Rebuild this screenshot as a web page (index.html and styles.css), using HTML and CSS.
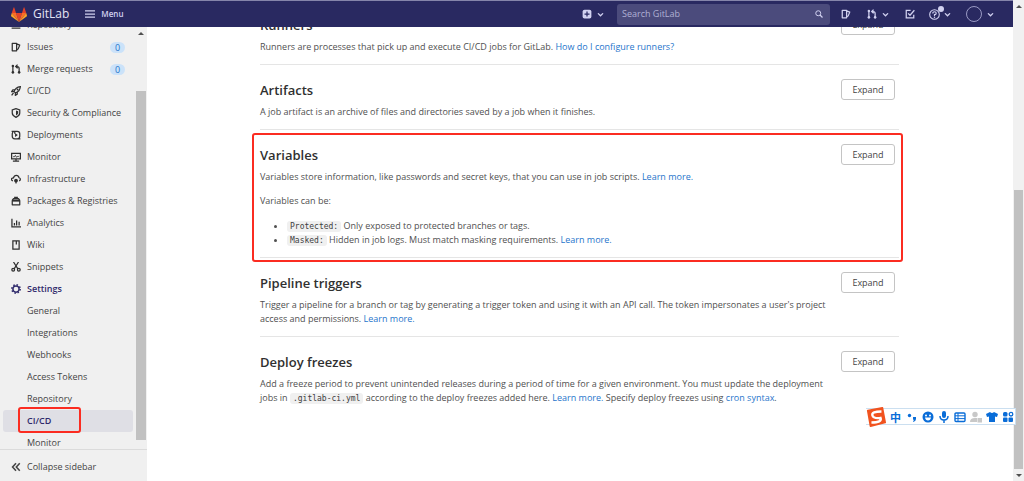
FILE: index.html
```html
<!DOCTYPE html>
<html lang="en">
<head>
<meta charset="utf-8">
<title>CI/CD Settings · GitLab</title>
<link rel="stylesheet" href="styles.css">
</head>
<body>
<svg class="defs" aria-hidden="true">
  <symbol id="merge" viewBox="0 0 16 16"><path d="M3 4v11M13 15V7q0-3-3-3H8M10.500 1 7.500 4l3 3" fill="none" stroke="currentColor" stroke-width="2"/><circle cx="3" cy="3" r="2" fill="currentColor"/><circle cx="13" cy="13" r="2" fill="currentColor"/><circle cx="3" cy="13" r="2" fill="currentColor"/></symbol>
  <symbol id="issues" viewBox="0 0 16 16"><path d="M2 2h7v12H2zM9 3l5 2-2.500 6L9 13" fill="none" stroke="currentColor" stroke-width="2" stroke-linejoin="round"/></symbol>
  <symbol id="chevron" viewBox="0 0 16 16"><path d="m3 6 5 5 5-5" fill="none" stroke="currentColor" stroke-width="3" stroke-linecap="round"/></symbol>
</svg>
<div class="window">
  <div class="app">
    <header class="navbar">
      <a class="brand" href="#">
        <svg class="logo" viewBox="0 0 32 30"><path fill="#e24329" d="m16 30 6-18H10z"/><path fill="#fc6d26" d="m16 30-6-18H1.500zM16 30l6-18h8.500z"/><path fill="#fca326" d="M1.500 12 0 17.500q0 1 .8 1.600L16 30zM30.500 12l1.500 5.500q0 1-.8 1.600L16 30z"/><path fill="#e24329" d="M1.500 12H10L6.500 1q-.6-1-1.200 0zM30.500 12H22l3.500-11q.6-1 1.200 0z"/></svg>
        <span>GitLab</span>
      </a>
      <button class="menu" type="button">
        <svg class="icon" viewBox="0 0 16 16"><path d="M0 3h16M0 8h16M0 13h16" stroke="currentColor" stroke-width="2"/></svg>
        Menu
      </button>
      <div class="tools">
        <button type="button" class="tool" aria-label="Create new"><svg class="icon" viewBox="0 0 16 16"><rect x="1" y="1" width="14" height="14" rx="3" fill="currentColor"/><path d="M8 4v8M4 8h8" stroke="#292961" stroke-width="2"/></svg><svg class="caret"><use href="#chevron"/></svg></button>
        <label class="search"><input type="search" placeholder="Search GitLab" aria-label="Search GitLab"><svg class="icon small" viewBox="0 0 16 16"><circle cx="6.500" cy="6.500" r="5" fill="none" stroke="currentColor" stroke-width="2"/><path d="m10 10 5 5" stroke="currentColor" stroke-width="2.500"/></svg></label>
        <button type="button" class="tool issues-tool" aria-label="Issues"><svg class="icon"><use href="#issues"/></svg></button>
        <button type="button" class="tool" aria-label="Merge requests"><svg class="icon"><use href="#merge"/></svg><svg class="caret"><use href="#chevron"/></svg></button>
        <button type="button" class="tool todo-tool" aria-label="To-do"><svg class="icon" viewBox="0 0 16 16"><path d="M9 2H2v12h12V9M5 7l3 3 7-8" fill="none" stroke="currentColor" stroke-width="2"/></svg></button>
        <button type="button" class="tool help" aria-label="Help"><svg class="icon large" viewBox="0 0 16 16"><circle cx="8" cy="8" r="7" fill="none" stroke="currentColor" stroke-width="1.600"/><path d="M5.500 6.500Q5.500 4 8 4t2.500 2.200Q10.500 8 8 8.200V10" fill="none" stroke="currentColor" stroke-width="1.700"/><circle cx="8" cy="12" r="1.100" fill="currentColor"/></svg><svg class="caret"><use href="#chevron"/></svg><i class="dot"></i></button>
        <button type="button" class="tool user" aria-label="Account"><i class="avatar"></i><svg class="caret"><use href="#chevron"/></svg></button>
      </div>
    </header>
    <div class="body">
      <aside class="sidebar">
        <div class="scroll">
          <nav class="nav">
            <a class="item" href="#"><svg class="icon" viewBox="0 0 16 16"><path d="M2 10V2h12v8M1 13h14" fill="none" stroke="currentColor" stroke-width="2"/></svg>Repository</a>
            <a class="item" href="#"><svg class="icon"><use href="#issues"/></svg>Issues<span class="badge">0</span></a>
            <a class="item" href="#"><svg class="icon"><use href="#merge"/></svg>Merge requests<span class="badge">0</span></a>
            <a class="item" href="#"><svg class="icon" viewBox="0 0 16 16"><path d="M5 9q2-7 10-8-1 8-8 10zM6 6H3L1 9l4 0M10 10v3l-3 2v-4M4 11l-3 4" fill="none" stroke="currentColor" stroke-width="2"/><circle cx="10.500" cy="5.500" r="1.500" fill="currentColor"/></svg>CI/CD</a>
            <a class="item" href="#"><svg class="icon" viewBox="0 0 16 16"><path d="M8 1 2 3v5q0 4 6 7 6-3 6-7V3z" fill="none" stroke="currentColor" stroke-width="2"/><path d="M8 4v8q3.500-2 3.500-4V5z" fill="currentColor"/></svg>Security &amp; Compliance</a>
            <a class="item" href="#"><svg class="icon" viewBox="0 0 16 16"><path d="M6 2h4q4 0 4 4v4q0 4-4 4H8M10 14H6q-4 0-4-4V6q0-3 3-4M1 2h5v4M15 14h-5" fill="none" stroke="currentColor" stroke-width="2"/><path d="m6.500 5 4.500 3-4.500 3z" fill="currentColor"/></svg>Deployments</a>
            <a class="item" href="#"><svg class="icon" viewBox="0 0 16 16"><path d="M1 2h14v9H1zM3 14.500h10M8 11v3" fill="none" stroke="currentColor" stroke-width="2"/><path d="M3.500 7.500h2l1.500-2 2 3 1.500-1.500h2" fill="none" stroke="currentColor" stroke-width="1.500"/></svg>Monitor</a>
            <a class="item" href="#"><svg class="icon" viewBox="0 0 16 16"><path d="M3 11Q0 10 1 7.500 2 6 4 6q1-4 4.500-4T13 6q2 .5 2 2.500T13 11" fill="none" stroke="currentColor" stroke-width="2"/><circle cx="8" cy="10.500" r="3" fill="currentColor"/><path d="M8 9v6" fill="none" stroke="currentColor" stroke-width="2"/></svg>Infrastructure</a>
            <a class="item" href="#"><svg class="icon" viewBox="0 0 16 16"><path d="M2 7h12v7H2zM2 7l2-3h8l2 3M5 2h6" fill="none" stroke="currentColor" stroke-width="2" stroke-linejoin="round"/><path d="M2 6h12v3H2z" fill="currentColor"/></svg>Packages &amp; Registries</a>
            <a class="item" href="#"><svg class="icon" viewBox="0 0 16 16"><path d="M1.500 1v13H16M5.500 8v4M9 4v8M13 6v6" fill="none" stroke="currentColor" stroke-width="2"/></svg>Analytics</a>
            <a class="item" href="#"><svg class="icon" viewBox="0 0 16 16"><path d="M3 1.500h10v13H3zM8.500 1v6" fill="none" stroke="currentColor" stroke-width="2"/></svg>Wiki</a>
            <a class="item" href="#"><svg class="icon" viewBox="0 0 16 16"><path d="m4 0 7 11M12 0 5 11" stroke="currentColor" stroke-width="2"/><circle cx="3.500" cy="12.500" r="2.200" fill="none" stroke="currentColor" stroke-width="2"/><circle cx="12.500" cy="12.500" r="2.200" fill="none" stroke="currentColor" stroke-width="2"/></svg>Snippets</a>
            <a class="item current" href="#"><svg class="icon" viewBox="0 0 16 16"><circle cx="8" cy="8" r="5" fill="none" stroke="currentColor" stroke-width="2.400"/><circle cx="8" cy="8" r="6.700" fill="none" stroke="currentColor" stroke-width="2.400" stroke-dasharray="2.400 2.862"/></svg>Settings</a>
            <a class="item sub" href="#">General</a>
            <a class="item sub" href="#">Integrations</a>
            <a class="item sub" href="#">Webhooks</a>
            <a class="item sub" href="#">Access Tokens</a>
            <a class="item sub" href="#">Repository</a>
            <a class="item sub active" href="#">CI/CD</a>
            <a class="item sub" href="#">Monitor</a>
          </nav>
          <div class="side-track"><i class="arrow up"></i><i class="thumb"></i></div>
        </div>
        <button class="collapse" type="button"><svg class="icon" viewBox="0 0 16 16"><path d="M8 2 2.500 8 8 14M14 2 8.500 8l5.500 6" fill="none" stroke="currentColor" stroke-width="2.500"/></svg>Collapse sidebar</button>
      </aside>
      <main class="main">
        <div class="content">
          <section class="section">
            <div class="text"><h4>Runners</h4><p>Runners are processes that pick up and execute CI/CD jobs for GitLab. <a href="#">How do I configure runners?</a></p></div>
            <button type="button" class="expand">Expand</button>
          </section>
          <section class="section">
            <div class="text"><h4>Artifacts</h4><p>A job artifact is an archive of files and directories saved by a job when it finishes.</p></div>
            <button type="button" class="expand">Expand</button>
          </section>
          <section class="section marked">
            <div class="text"><h4>Variables</h4><p>Variables store information, like passwords and secret keys, that you can use in job scripts. <a href="#">Learn more.</a></p><p>Variables can be:</p>
              <ul><li><code>Protected:</code> Only exposed to protected branches or tags.</li><li><code>Masked:</code> Hidden in job logs. Must match masking requirements. <a href="#">Learn more.</a></li></ul></div>
            <button type="button" class="expand">Expand</button>
          </section>
          <section class="section">
            <div class="text"><h4>Pipeline triggers</h4><p>Trigger a pipeline for a branch or tag by generating a trigger token and using it with an API call. The token impersonates a user's project access and permissions. <a href="#">Learn more.</a></p></div>
            <button type="button" class="expand">Expand</button>
          </section>
          <section class="section">
            <div class="text"><h4>Deploy freezes</h4><p>Add a freeze period to prevent unintended releases during a period of time for a given environment. You must update the deployment jobs in <code>.gitlab-ci.yml</code> according to the deploy freezes added here. <a href="#">Learn more.</a> Specify deploy freezes using <a href="#">cron syntax</a>.</p></div>
            <button type="button" class="expand">Expand</button>
          </section>
        </div>
      </main>
    </div>
  </div>
  <div class="page-track"><i class="arrow up"></i><i class="thumb"></i><i class="arrow down"></i></div>
</div>
<div class="ime">
  <svg class="ime-logo" viewBox="0 0 22 22"><path d="M2 4 18 1l3 16-16 4z" fill="#f1531f" stroke="#f1531f" stroke-width="2" stroke-linejoin="round"/><path d="M17 5Q6 5 7 9t9 3q2 5-10 5" fill="none" stroke="#fff" stroke-width="2.600"/></svg>
  <span class="ime-lang">中</span>
  <svg viewBox="0 0 12 12"><circle cx="3.500" cy="4.500" r="1.700"/><path d="M7 6h3v2q0 2-2.500 3l-.5-.8 1.200-1.400H7z"/></svg>
  <svg viewBox="0 0 12 12"><circle cx="6" cy="6" r="5.500"/><circle cx="4" cy="4.500" r="1" fill="#fff"/><circle cx="8" cy="4.500" r="1" fill="#fff"/><path d="M3 6.500h6q-.5 3-3 3t-3-3z" fill="#fff"/></svg>
  <svg viewBox="0 0 12 12"><rect x="4" y="0" width="4" height="7" rx="2"/><path d="M2 5q0 4 4 4t4-4M6 9v3" fill="none" stroke="currentColor" stroke-width="1.500"/></svg>
  <svg viewBox="0 0 12 12"><rect x="1" y="2" width="10" height="8.500" rx="1" fill="none" stroke="currentColor" stroke-width="1.400"/><path d="M1 4.800h10M1 7.600h10M4 2v8" stroke="currentColor"/></svg>
  <svg class="off" viewBox="0 0 12 12"><circle cx="5" cy="3.500" r="2.700"/><path d="M0 11q0-4 5-4h2v4zM7.500 7H12v4.500H7.500z"/></svg>
  <svg viewBox="0 0 12 12"><path d="m4 1-4 2 1 3 2-.5V11h6V5.500l2 .5 1-3-4-2Q6 3 4 1z"/></svg>
  <svg viewBox="0 0 12 12"><rect x="1" y="1" width="4.500" height="4.500" rx="1.500"/><circle cx="9" cy="3.200" r="1.800" fill="none" stroke="currentColor" stroke-width="1.300"/><rect x="1" y="6.500" width="4.500" height="4.500" rx="1"/><rect x="6.500" y="6.500" width="4.500" height="4.500" rx="1"/></svg>
</div>
</body>
</html>
```
FILE: styles.css
```css
*, *::before, *::after { box-sizing: border-box; }
body { margin: 0; font: 9px/14px "Open Sans", "Noto Sans", sans-serif; color: #505050; background: #fff; }
a { color: #1f75cb; text-decoration: none; }
button { font: inherit; color: inherit; background: none; border: 0; padding: 0; }
svg { flex: none; }
.defs { position: absolute; width: 0; height: 0; }
.window { display: flex; height: 100vh; overflow: hidden; }
.app { flex: 1; min-width: 0; display: flex; flex-direction: column; }
.icon { width: 10px; height: 10px; }
.icon.small { width: 8px; height: 8px; }
.icon.large { width: 11px; height: 11px; }
.caret { width: 7px; height: 7px; }

.navbar { flex: none; display: flex; align-items: center; height: 27px; padding: 0 19px 0 11px; border-top: 1px solid #8585aa; background: #292961; color: #d1d1f0; }
.brand { display: flex; align-items: center; gap: 6px; color: #e4e4f4; font-size: 12px; }
.logo { width: 16px; height: 15px; }
.menu { display: flex; align-items: center; gap: 6px; margin-left: 16px; font-size: 8px; font-weight: 600; }
.tools { display: flex; align-items: center; margin-left: auto; }
.tool { display: flex; align-items: center; gap: 5px; }
.search { display: flex; align-items: center; width: 213px; height: 21px; margin: 0 11px 0 13px; padding: 0 7px 0 5px; border-radius: 3px; background: #4b4b7c; }
.search input { flex: 1; min-width: 0; padding: 0; border: 0; outline: 0; background: none; font: inherit; color: #fff; }
.search input::placeholder { color: #b0b0d4; opacity: 1; }
.issues-tool { margin-right: 16px; }
.todo-tool { margin: 0 14px 0 16px; }
.help { position: relative; gap: 4px; margin-right: 15px; }
.dot { position: absolute; left: 9px; top: -3px; width: 6px; height: 6px; border-radius: 50%; background: #d1d1f0; }
.avatar { width: 16px; height: 16px; border: 1px solid #9a9ac4; border-radius: 50%; }

.body { flex: 1; min-height: 0; display: flex; }
.sidebar { flex: none; display: flex; flex-direction: column; width: 147px; background: #f0f0f0; color: #444; }
.scroll { flex: 1; min-height: 0; display: flex; overflow: hidden; }
.nav { flex: 1; min-width: 0; margin-top: -13px; padding: 0 3px; }
.item { display: flex; align-items: center; gap: 6px; height: 22px; padding: 0 8px; border-radius: 3px; color: inherit; white-space: nowrap; }
.item .icon { color: #303030; }
.badge { width: 15px; height: 11px; margin-left: auto; border-radius: 6px; background: #cbe2f9; color: #1f75cb; line-height: 11px; text-align: center; }
.item.current, .item.current .icon { color: #2f2a6b; font-weight: 600; }
.item.sub { padding-left: 24px; }
.item.active { background: #dfdfe5; color: #2f2a6b; font-weight: 600; position: relative; }
.active::after { content: ""; position: absolute; left: 15px; top: -3px; width: 63px; height: 26px; border: 2px solid #fb2c21; border-radius: 3px; }
.side-track { flex: none; display: flex; flex-direction: column; align-items: center; width: 11px; padding: 5px 1px 9px 0; }
.side-track .thumb { flex: 1; width: 10px; margin-top: 56px; background: #c1c1c1; }
.arrow { border: 3px solid transparent; border-top-width: 0; border-bottom: 3px solid #505050; }
.arrow.down { transform: rotate(180deg); }
.collapse { display: flex; align-items: center; gap: 6px; height: 32px; padding: 2px 11px 0; border-top: 1px solid #dbdbdb; }

.main { flex: 1; min-width: 0; overflow: hidden; }
.content { margin: -27px 114px 0 113px; }
.section { display: flex; justify-content: space-between; align-items: flex-start; position: relative; padding: 14px 4px 10px 0; border-bottom: 1px solid #e5e5e5; }
.section:last-child { border-bottom: 0; }
.text { width: 576px; }
h4 { margin: 0 0 4px; font-size: 13px; line-height: 22px; font-weight: 600; color: #303030; }
p { margin: 0 0 10px; }
p:last-child { margin: 0; }
ul { margin: 0; padding-left: 27px; }
.text p + ul { margin-top: 11px; }
code { padding: 1px 3px; border-radius: 3px; background: #f0f0f0; font: 8px/10px "DejaVu Sans Mono", monospace; color: #404040; }
.expand { flex: none; width: 54px; height: 21px; border: 1px solid #c4c4c4; border-radius: 3px; background: #fff; color: #444; }
.marked::after { content: ""; position: absolute; inset: 3px -4px -5px -8px; border: 2px solid #fb2c21; border-radius: 3px; pointer-events: none; }

.page-track { flex: none; display: flex; flex-direction: column; align-items: center; width: 11px; padding: 5px 0 4px; background: #f1f1f1; }
.page-track .thumb { width: 9px; height: 279px; margin-top: auto; margin-bottom: 5px; background: #c1c1c1; }

.ime { position: absolute; right: 8px; bottom: 56px; display: flex; align-items: center; gap: 4px; height: 17px; padding-right: 1px; border: 1px solid #cbdff0; border-left: 0; background: #fff; color: #0a6dd8; }
.ime svg { width: 12px; height: 12px; fill: currentColor; }
.ime .ime-logo { width: 20px; height: 20px; }
.ime-lang { width: 12px; font: 700 11px/14px "Noto Sans CJK SC", sans-serif; }
.ime .off { color: #c8c8c8; }
```
